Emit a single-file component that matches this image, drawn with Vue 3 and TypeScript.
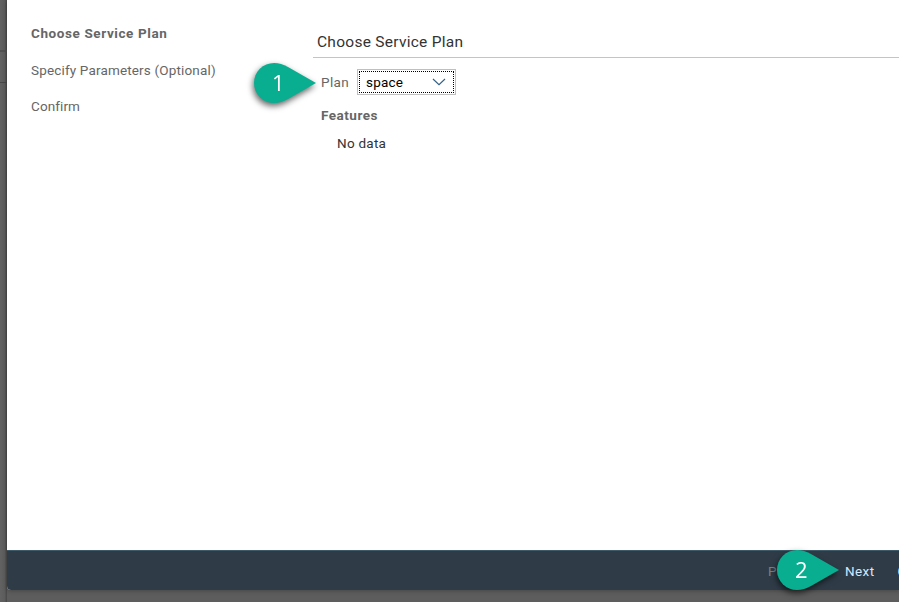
<script setup lang="ts">
import { ref } from 'vue'

interface Step {
  id: string
  label: string
}

const steps: Step[] = [
  { id: 'plan', label: 'Choose Service Plan' },
  { id: 'params', label: 'Specify Parameters (Optional)' },
  { id: 'confirm', label: 'Confirm' },
]
const current = ref('plan')
const plan = ref('space')
</script>

<template>
  <div class="page">
    <div class="backdrop">
      <div class="strip strip-top"></div>
      <div class="strip strip-mid"></div>
    </div>
    <section class="dialog">
      <div class="body">
        <nav class="steps">
          <a v-for="s in steps" :key="s.id" class="step" :class="[s.id, { active: s.id === current }]"><span>{{ s.label }}</span></a>
        </nav>
        <main class="content">
          <h2 class="title"><span>Choose Service Plan</span></h2>
          <div class="form">
            <div class="row">
              <label class="label">Plan</label>
              <div class="select">
                <div class="focus">
                  <span class="value">{{ plan }}</span>
                  <svg class="chevron" width="14" height="8" viewBox="0 0 14 8">
                    <path d="M1 1 L7 6.6 L13 1" fill="none" stroke="#346187" stroke-width="1.2" />
                  </svg>
                </div>
              </div>
            </div>
            <h3 class="features">Features</h3>
            <p class="empty">No data</p>
          </div>
        </main>
      </div>
      <footer class="footer">
        <span class="btn previous">Previous</span>
        <span class="btn next">Next</span>
        <span class="btn cancel">Cancel</span>
      </footer>
    </section>

    <div class="marker first">
      <svg width="62" height="40" viewBox="0 0 62 40">
        <path d="M20 0 C25 0 29 1.2 34 4 L62 20 L34 36 C29 38.8 25 40 20 40 A20 20 0 0 1 20 0 Z" fill="#09ae91" />
      </svg>
      <span class="num">1</span>
    </div>
    <div class="marker second">
      <svg width="62" height="40" viewBox="0 0 62 40">
        <path d="M20 0 C25 0 29 1.2 34 4 L62 20 L34 36 C29 38.8 25 40 20 40 A20 20 0 0 1 20 0 Z" fill="#09ae91" />
      </svg>
      <span class="num">2</span>
    </div>
  </div>
</template>

<style>
body {
  margin: 0;
  overflow: hidden;
}
</style>

<style scoped>
.page {
  position: relative;
  display: flex;
  box-sizing: border-box;
  width: 899px;
  height: 602px;
  overflow: hidden;
  background: #5d5d5d;
  font-family: Roboto, "Liberation Sans", sans-serif;
  font-size: 13.5px;
  letter-spacing: 0.2px;
  color: #6a6d70;
}
.backdrop {
  width: 7px;
  height: 602px;
  flex: none;
  background: linear-gradient(90deg, #626262, #5c5c5c 65%, #474747);
}
.strip {
  box-sizing: border-box;
}
.strip-top {
  height: 52px;
  border-bottom: 2px solid #505050;
}
.strip-mid {
  height: 31px;
  border-bottom: 1px solid #474747;
}
.dialog {
  width: 892px;
  height: 590px;
  flex: none;
  display: flex;
  flex-direction: column;
  overflow: hidden;
  border-bottom-left-radius: 4px;
  background: #fff;
  box-shadow: 0 1px 4px rgba(0, 0, 0, 0.25);
}
.body {
  flex: 1;
  display: flex;
}
.steps {
  width: 306px;
  box-sizing: border-box;
  padding: 15px 0 0 24px;
  flex: none;
  color: #666;
}
.step {
  display: block;
  height: 36.5px;
  line-height: 37px;
  white-space: nowrap;
}
.step.active {
  font-weight: 700;
  letter-spacing: 0.6px;
}
.step.params {
  letter-spacing: 0.16px;
}
.step.confirm {
  letter-spacing: 0.1px;
}
.content {
  flex: 1;
}
.title {
  margin: 0;
  box-sizing: border-box;
  height: 58px;
  padding: 26px 0 0 4px;
  border-bottom: 1px solid #c4c4c4;
  font-size: 15.5px;
  font-weight: 400;
  line-height: 32px;
  letter-spacing: 0.27px;
  color: #333;
}
.form {
  padding: 11px 0 0 8px;
}
.row {
  display: flex;
  align-items: center;
  height: 26px;
}
.label {
  width: 36px;
  letter-spacing: 0.4px;
  color: #666;
}
.select {
  box-sizing: border-box;
  width: 99px;
  height: 26px;
  padding: 1px;
  border: 1px solid #bfbfbf;
}
.focus {
  box-sizing: border-box;
  height: 22px;
  display: flex;
  align-items: center;
  justify-content: space-between;
  padding: 0 7px 0 6px;
  border: 1px dotted #000;
  color: #000;
}
.features {
  margin: 10px 0 0;
  font-size: 13.5px;
  line-height: 20px;
  letter-spacing: 0.5px;
  color: #666;
}
.empty {
  margin: 8px 0 0 16px;
  line-height: 20px;
  letter-spacing: 0.25px;
  color: #333;
}
.footer {
  box-sizing: border-box;
  height: 40px;
  display: flex;
  align-items: center;
  padding: 1px 0 0 761px;
  border-top: 1px solid #3e5968;
  background: #2f3c48;
  color: #d1e8ff;
  white-space: nowrap;
}
.btn {
  flex: none;
}
.previous {
  width: 77px;
  color: #77818b;
}
.next {
  width: 52.5px;
  letter-spacing: 0.4px;
}
.marker {
  position: absolute;
  width: 62px;
  height: 40px;
  filter: drop-shadow(-1px 3px 3px rgba(0, 0, 0, 0.6));
}
.marker svg {
  display: block;
}
.first {
  left: 254px;
  top: 63px;
}
.second {
  left: 777px;
  top: 550px;
}
.num {
  position: absolute;
  left: 0;
  top: 0;
  width: 49px;
  line-height: 39px;
  text-align: center;
  font-family: "Open Sans", "Noto Sans", sans-serif;
  font-size: 22px;
  font-weight: 500;
  color: #fff;
}
</style>
